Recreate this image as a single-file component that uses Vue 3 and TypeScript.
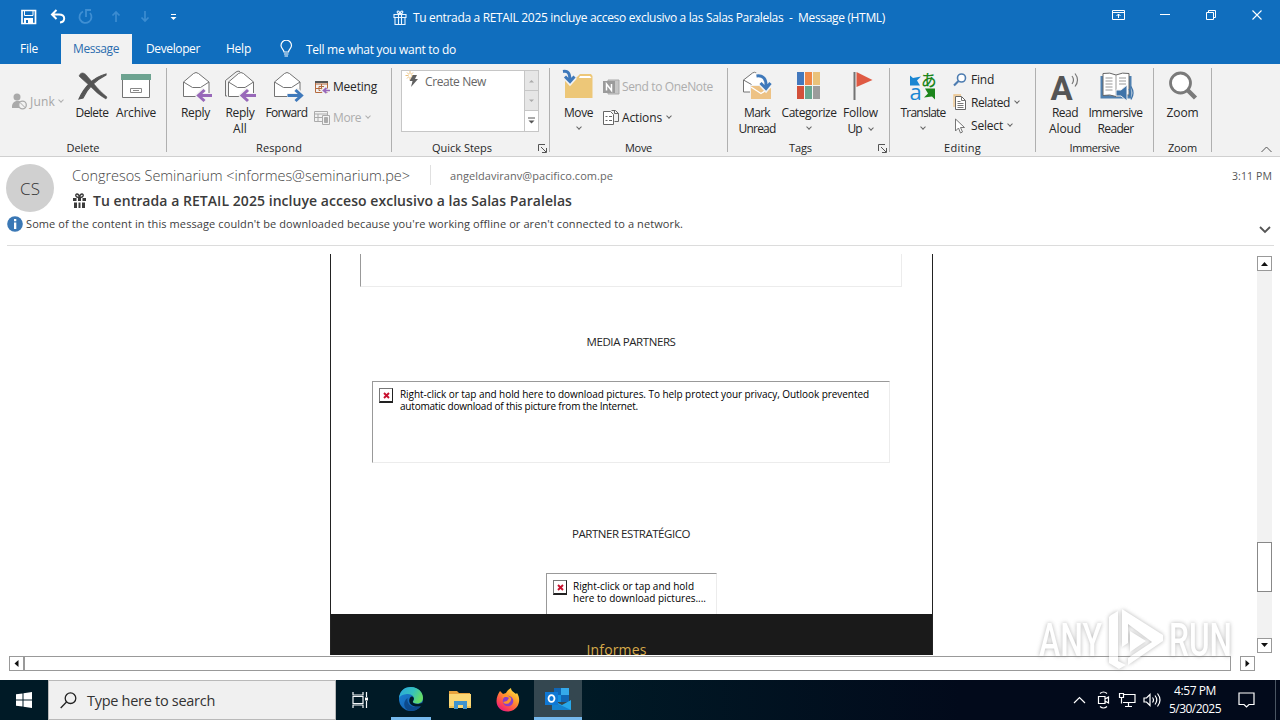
<script setup lang="ts">
import type { Directive } from 'vue'

// Tracks a line of text out (or in) so that it fills the given width.
const vFit: Directive<HTMLElement, number> = {
  mounted(el, binding) {
    const natural = el.getBoundingClientRect().width
    const count = (el.textContent ?? '').length
    if (count > 0) el.style.letterSpacing = `${(binding.value - natural) / count}px`
  },
}

const swatches: { x: number; y: number; color: string }[] = [
  { x: 6, y: 4, color: '#4278bd' },
  { x: 14, y: 4, color: '#ee8747' },
  { x: 22, y: 4, color: '#eac27a' },
  { x: 6, y: 18, color: '#d2503a' },
  { x: 14, y: 18, color: '#69a690' },
  { x: 22, y: 18, color: '#9c9c9c' },
]

const notice = [
  { text: 'Right-click or tap and hold here to download pictures. To help protect your privacy, Outlook prevented', width: 469 },
  { text: 'automatic download of this picture from the Internet.', width: 238 },
]
const shortNotice = [
  { text: 'Right-click or tap and hold', width: 121 },
  { text: 'here to download pictures....', width: 133 },
]
</script>

<template>
  <div class="screen">
    <header class="titlebar">
      <svg class="quick" width="190" height="32" viewBox="0 0 190 32" fill="none">
        <path d="M22 10.500h13.500v13H22z" stroke="#fff" stroke-width="1.700" />
        <path d="M24 18h9v6h-9z" fill="#fff" /><path d="M26 20h2v3h-2z" fill="#106ebe" />
        <path d="M24.500 11v4.500h8.500V11" stroke="#fff" />
        <path d="M56.500 10l-4.500 4.500 4.500 4.500M52.500 14.500h6.500c7 0 6.500 7.500 1 8" stroke="#fff" stroke-width="2" />
        <path d="M83 11.500a6 6 0 1 0 7 1.500M86 17v-7h5" stroke="#3f8fd3" stroke-width="1.800" />
        <path d="M116 22V12M112.500 15.500L116 12l3.500 3.500" stroke="#3b8cd1" stroke-width="1.700" />
        <path d="M145 11v10M141.500 17.500L145 21l3.500-3.500" stroke="#3b8cd1" stroke-width="1.700" />
        <path d="M171 14.500h5" stroke="#fff" /><path d="M170.500 17h6l-3 3z" fill="#fff" />
      </svg>
      <div class="caption">
        <svg width="14" height="16" viewBox="0 0 14 16" fill="none" stroke="#e9f5ff" stroke-width="1.100">
          <path d="M1 4.500h12v3H1zM2 7.500h10v7H2zM5.500 4.500v10M8.500 4.500v10M7 4C4 4 3.500 1 5 1s2 3 2 3 .5-3 2-3 1 3-2 3" />
        </svg>
        <span v-fit="472">Tu entrada a RETAIL 2025 incluye acceso exclusivo a las Salas Paralelas&nbsp; -&nbsp; Message (HTML)</span>
      </div>
      <svg class="controls" width="168" height="32" viewBox="0 0 168 32" fill="none" stroke="#fff">
        <path d="M0.500 10.500h12v9h-12zM0.500 12.500h12M6.500 18v-4M4.500 16l2-2 2 2" />
        <path d="M48 14.500h10M94.500 12.500h7v7h-7zM96.500 12v-1.500h7v7h-1.500" />
        <path d="M140.500 10.500l9 9M149.500 10.500l-9 9" stroke-width="1.100" />
      </svg>
    </header>

    <nav class="tabs">
      <div class="tab file"><span v-fit="18">File</span></div>
      <div class="tab active"><span v-fit="46">Message</span></div>
      <div class="tab dev"><span v-fit="54">Developer</span></div>
      <div class="tab help"><span v-fit="25">Help</span></div>
      <svg width="13" height="18" viewBox="0 0 13 18" fill="none" stroke="#fff" stroke-width="1.200">
        <path d="M4 12C4 9.500 1 8.500 1 5.500a5 5 0 0 1 10.500 0C11.500 8.500 8.500 9.500 8.500 12zM4 14h4.500M4.500 16h3.500" />
      </svg>
      <span class="tell" v-fit="150">Tell me what you want to do</span>
    </nav>

    <section class="ribbon">
      <div class="group g-delete">
        <div class="body">
          <div class="junk">
            <svg width="17" height="17" viewBox="0 0 17 17"><circle cx="6" cy="4" r="3.500" fill="#aaa" /><path d="M1 15c-1-9 10-9 10-4l-3 4z" fill="#aaa" /><circle cx="11.500" cy="12" r="3.800" fill="#f2f2f2" stroke="#aaa" stroke-width="1.300" /><path d="M9 9.500l5 5" stroke="#aaa" /></svg>
            <span v-fit="25">Junk</span><i class="chev pale" />
          </div>
          <div class="big w44">
            <svg width="36" height="37" viewBox="0 0 36 37"><path d="M5 8c2-5 6-3 8 0l7 8c4 5 8 9 13 13l-1 2c-7-4-11-8-16-13L7 10z" fill="#555" stroke="#555" stroke-width=".6" /><path d="M32 7C22 12 14 19 9 30l-4 1C10 19 20 9 32 6z" fill="#555" stroke="#555" stroke-width="1.200" /></svg>
            <span v-fit="33">Delete</span>
          </div>
          <div class="big w44">
            <svg width="36" height="37" viewBox="0 0 36 37"><path d="M4.500 11h27v18.500h-27z" fill="#fff" stroke="#737373" /><path d="M3 6h30v6H3z" fill="#6da390" /><path d="M12.500 20.500h11v4h-11zM15 22.500h6" fill="none" stroke="#888" /></svg>
            <span v-fit="40">Archive</span>
          </div>
        </div>
        <div class="label"><span v-fit="33">Delete</span></div>
      </div>

      <div class="group g-respond">
        <div class="body">
          <div class="big w41">
            <svg width="36" height="37" viewBox="0 0 36 37" fill="none"><path d="M5.500 14l10-8.500q2.500-2 5 0l10.500 8.500V28.500H5.500z" fill="#fff" stroke="#737373" /><path d="M5.500 14l9 5.500h8L31 14" stroke="#737373" /><path d="M35 27.500H20M26.500 21l-6.500 6.500 6.500 6" stroke="#f2f2f2" stroke-width="5" /><path d="M34 27.500H20M26.500 22l-6 5.500 6 5.500" stroke="#9868b9" stroke-width="3" /></svg>
            <span v-fit="29">Reply</span>
          </div>
          <div class="big w48">
            <svg width="36" height="37" viewBox="0 0 36 37" fill="none"><path d="M3.500 26V12.500L14 4q2-1.500 4-.5M5 28h-1.500V23" stroke="#737373" /><path d="M6.500 14l10-8.500q2.500-2 5 0L31.500 14V28.500H6.500z" fill="#fff" stroke="#737373" /><path d="M6.500 14l9 5.500h7.500L31.500 14" stroke="#737373" /><path d="M35 27.500H20M26 21l-6.500 6.500 6.500 6" stroke="#f2f2f2" stroke-width="5" /><path d="M34 27.500H19.500M26 22l-6 5.500 6 5.500" stroke="#9868b9" stroke-width="3" /></svg>
            <span v-fit="29">Reply</span><span v-fit="14">All</span>
          </div>
          <div class="big w45">
            <svg width="36" height="37" viewBox="0 0 36 37" fill="none"><path d="M5.500 14l10-8.500q2.500-2 5 0L31 14V28.500H5.500z" fill="#fff" stroke="#737373" /><path d="M5.500 14l9 5.500h8L31 14" stroke="#737373" /><path d="M18 27.500h15M26.500 21l6.500 6.500-6.500 6" stroke="#f2f2f2" stroke-width="5" /><path d="M18.500 27.500H32.500M26.500 22l6 5.500-6 5.500" stroke="#3f79bb" stroke-width="3" /></svg>
            <span v-fit="42">Forward</span>
          </div>
          <div class="stack two respond-stack">
            <div class="row"><svg width="17" height="16" viewBox="0 0 17 16" fill="none"><path d="M1.500 2.500h12v11h-12zM1.500 5h12M5 7.500h5v4H5zM7.500 5v8M1.500 9.500h12" stroke="#b56a3e" /><path d="M1 2h13v2H1z" fill="#555" /><path d="M16 11.500H9M12 8.500l-3 3 3 3" stroke="#f2f2f2" stroke-width="4" /><path d="M16 11.500H9.500M12.500 9l-3 2.500 3 2.500" stroke="#9868b9" stroke-width="1.700" /></svg><span v-fit="44">Meeting</span></div>
            <div class="row off"><svg width="17" height="16" viewBox="0 0 17 16" fill="none" stroke="#aaa"><path d="M.5 1.500h13v10H.5zM.5 4h13M4 4v7M.5 7.500h8" /><path d="M8.500 5.500h7v9h-7z" fill="#f2f2f2" /><path d="M10.500 7.500h3v5h-3z" fill="#aaa" /></svg><span v-fit="28">More</span><i class="chev pale" /></div>
          </div>
        </div>
        <div class="label"><span v-fit="46">Respond</span></div>
      </div>

      <div class="group g-steps">
        <div class="body">
          <div class="gallery">
            <div class="step">
              <svg width="18" height="19" viewBox="0 0 18 19" fill="none"><path d="M5 0v9M.5 4.500h9M2 1.500l6 6M8 1.500l-6 6" stroke="#eac07d" /><circle cx="5" cy="4.500" r="1.500" fill="#fff" /><path d="M8 4h4l-2 4h3l-7 8 1.500-6H4.500z" fill="#606060" /></svg>
              <span v-fit="61">Create New</span>
            </div>
            <div class="spin">
              <div><svg width="7" height="4"><path d="M1 3.500h5L3.500 1z" fill="#aaa" /></svg></div>
              <div><svg width="7" height="4"><path d="M1 .5h5L3.500 3z" fill="#aaa" /></svg></div>
              <div><svg width="9" height="8"><path d="M1 1h7" stroke="#555" /><path d="M1.500 3.500h6l-3 3z" fill="#555" /></svg></div>
            </div>
          </div>
        </div>
        <div class="label launch"><span v-fit="60">Quick Steps</span><svg width="9" height="9" viewBox="0 0 9 9" fill="none" stroke="#555"><path d="M.5 7V.500H7M3 3l5 5M8.500 4v4.500H4" /></svg></div>
      </div>

      <div class="group g-move">
        <div class="body">
          <div class="big w45">
            <svg width="36" height="37" viewBox="0 0 36 37" fill="none"><path d="M4 12l10-1 5-5h11l1.500 2v22H4z" fill="#edc778" /><path d="M19 8h10l1.500 2H18z" fill="#fff" /><path d="M2 3c6-1 7 4 7 10M4 9l5 5.500 5-5.500" stroke="#f2f2f2" stroke-width="5" /><path d="M2 3.500c6-1 7 3 7 10M4 8.500l5 5 4.500-5" stroke="#3f79bb" stroke-width="3" /></svg>
            <span v-fit="29">Move</span><i class="chev down" />
          </div>
          <div class="stack two move-stack">
            <div class="row off"><svg width="17" height="16" viewBox="0 0 17 16"><path d="M5 1h11v14H5z" fill="#c6c6c6" stroke="#aaa" /><path d="M0 2h12v12H0z" fill="#9b9b9b" /><path d="M3.500 11.500V5l5 6.500V5" fill="none" stroke="#fff" stroke-width="1.500" /></svg><span v-fit="91">Send to OneNote</span></div>
            <div class="row"><svg width="17" height="17" viewBox="0 0 17 17" fill="none" stroke="#666"><path d="M8.500 1.500h4l3 3v8h-4M11.500 1.500v3h4" /><path d="M.5 2.500h7l3 3v10H.5z" fill="#fff" /><path d="M2.500 7.500h2M6 7.500h3M2.500 11.500h2M6 11.500h3" /></svg><span v-fit="40">Actions</span><i class="chev" /></div>
          </div>
        </div>
        <div class="label"><span v-fit="27">Move</span></div>
      </div>

      <div class="group g-tags">
        <div class="body">
          <div class="big w44">
            <svg width="36" height="37" viewBox="0 0 36 37" fill="none"><path d="M4.500 12l9-7q2-1.500 4 0L27 12V24H4.500z" fill="#fff" stroke="#737373" /><path d="M4.500 12l8 4.500" stroke="#737373" /><path d="M11 17h22v15H11z" fill="#f2f2f2" /><path d="M12 18h20v13H12z" fill="#edc285" /><path d="M12 19l10 6.500L32 19" stroke="#fff" stroke-width="1.300" /><path d="M17 7c8-1 11 4 10 12M22 16l5 5.500 5-6" stroke="#f2f2f2" stroke-width="5" /><path d="M17.500 8c7-1 10 3 9.500 11M21.500 15l5.500 5.500 4.500-5.500" stroke="#3f79bb" stroke-width="3" /></svg>
            <span v-fit="26">Mark</span><span v-fit="37">Unread</span>
          </div>
          <div class="big w60">
            <svg width="36" height="37" viewBox="0 0 36 37"><rect v-for="s in swatches" :key="s.x + '-' + s.y" :x="s.x" :y="s.y" width="7" height="13" :fill="s.color" /></svg>
            <span v-fit="55">Categorize</span><i class="chev down" />
          </div>
          <div class="big w43">
            <svg width="36" height="37" viewBox="0 0 36 37"><path d="M10.500 4h2v28h-2z" fill="#737373" /><path d="M13.500 4l16 8-16 7z" fill="#df5a43" /></svg>
            <span v-fit="35">Follow</span><div class="with-chev"><span v-fit="14">Up</span><i class="chev" /></div>
          </div>
        </div>
        <div class="label launch"><span v-fit="23">Tags</span><svg width="9" height="9" viewBox="0 0 9 9" fill="none" stroke="#555"><path d="M.5 7V.500H7M3 3l5 5M8.500 4v4.500H4" /></svg></div>
      </div>

      <div class="group g-edit">
        <div class="body">
          <div class="big w50">
            <svg width="36" height="37" viewBox="0 0 36 37"><path d="M5 7.500l3 2.500 8-1.500-4 4 3 5H5z" fill="#1a86d2" /><path d="M30 31.500l-3-3-8 1 4-4-3-5h10z" fill="#1c861c" /><text x="16" y="17.500" class="kana">あ</text><text x="4.500" y="32" class="latin">a</text></svg>
            <span v-fit="45">Translate</span><i class="chev down" />
          </div>
          <div class="stack three">
            <div class="row"><svg width="14" height="14" viewBox="0 0 14 14" fill="none"><circle cx="8.500" cy="5" r="4" stroke="#4d7cb0" stroke-width="1.600" fill="#fff" /><path d="M5.500 8L1 12.500" stroke="#4d7cb0" stroke-width="2.200" /></svg><span v-fit="23">Find</span></div>
            <div class="row"><svg width="14" height="17" viewBox="0 0 14 17" fill="none"><path d="M1 13V1h7" stroke="#edc285" stroke-width="1.300" /><path d="M2.500 2.500h6l4 4v9h-10z" fill="#fff" stroke="#666" /><path d="M8.500 3v3.500h4M4.500 7.500h3M4.500 9.500h6M4.500 11.500h6M4.500 13.500h6" stroke="#777" /></svg><span v-fit="39">Related</span><i class="chev" /></div>
            <div class="row"><svg width="14" height="16" viewBox="0 0 14 16"><path d="M2.500 1v12l3-3 2 5 2-1-2-4.500h4z" fill="#fff" stroke="#777" /></svg><span v-fit="32">Select</span><i class="chev" /></div>
          </div>
        </div>
        <div class="label"><span v-fit="37">Editing</span></div>
      </div>

      <div class="group g-immersive">
        <div class="body">
          <div class="big w40">
            <svg width="36" height="37" viewBox="0 0 36 37"><text x="3.500" y="31.500" class="aloud">A</text><path d="M25 8q3 4 0 8M28 5.500q5 6.500 0 13" fill="none" stroke="#777" stroke-width="1.200" /></svg>
            <span v-fit="26">Read</span><span v-fit="32">Aloud</span>
          </div>
          <div class="big w61">
            <svg width="36" height="37" viewBox="0 0 36 37" fill="none"><path d="M2.500 8h31v22.500h-31z" fill="#4f80b0" /><path d="M5 5.500q7-1.500 13 1.500 6.500-3 13-1.500V27q-7-1-13 1.500Q12 26 5 27.500z" fill="#fff" stroke="#666" /><path d="M18 7v21M7.500 10h7M7.500 13h7M7.500 16h7M7.500 19h7M7.500 22h7M21 10h7M21 13h7M21 16h7" stroke="#999" /><path d="M18 22h5l6-5v16l-6-5h-5z" fill="#3f73a8" stroke="#f2f2f2" /><path d="M31 21q2.500 4 0 8M33 18.500q4 6.500 0 13" stroke="#3f73a8" stroke-width="1.300" /></svg>
            <span v-fit="54">Immersive</span><span v-fit="36">Reader</span>
          </div>
        </div>
        <div class="label"><span v-fit="50">Immersive</span></div>
      </div>

      <div class="group g-zoom">
        <div class="body">
          <div class="big w58">
            <svg width="36" height="37" viewBox="0 0 36 37" fill="none"><circle cx="15.500" cy="15" r="10" fill="#fff" stroke="#7a7a7a" stroke-width="2.800" /><path d="M22.500 22l8 8" stroke="#7a7a7a" stroke-width="4.500" /></svg>
            <span v-fit="32">Zoom</span>
          </div>
        </div>
        <div class="label"><span v-fit="29">Zoom</span></div>
      </div>
      <svg class="collapse" width="11" height="7" viewBox="0 0 11 7" fill="none" stroke="#555"><path d="M.5 6l5-5 5 5" /></svg>
    </section>

    <section class="message-head">
      <div class="avatar"><span v-fit="20">CS</span></div>
      <div class="lines">
        <div class="from">
          <span class="sender" v-fit="338">Congresos Seminarium &lt;informes@seminarium.pe&gt;</span>
          <i class="rule" />
          <span class="to" v-fit="163">angeldaviranv@pacifico.com.pe</span>
          <span class="time" v-fit="40">3:11 PM</span>
        </div>
        <div class="subject">
          <svg width="13" height="15" viewBox="0 0 13 15" fill="none"><path d="M6.500 4.500C2 4.500 2 1 4 1s2.500 3.500 2.500 3.500S7 1 9 1s2 3.500-2.500 3.500" stroke="#3b3b3b" stroke-width="1.300" /><path d="M0 5h3.500v3H0zM5 5h3v3H5zM9.500 5H13v3H9.500zM1 9.500h3V15H1zM5.500 9.500h2V15h-2zM9 9.500h3V15H9z" fill="#3b3b3b" /></svg>
          <span v-fit="479">Tu entrada a RETAIL 2025 incluye acceso exclusivo a las Salas Paralelas</span>
        </div>
      </div>
      <div class="info">
        <svg width="16" height="16" viewBox="0 0 16 16"><circle cx="8" cy="8" r="7.800" fill="#3b78b5" /><path d="M7 6.500h2.300V13H7zM7 3h2.300v2.200H7z" fill="#fff" /></svg>
        <span v-fit="657">Some of the content in this message couldn't be downloaded because you're working offline or aren't connected to a network.</span>
        <svg class="more" width="12" height="8" viewBox="0 0 12 8" fill="none"><path d="M1 1l5 5 5-5" stroke="#555" stroke-width="1.800" /></svg>
      </div>
    </section>

    <main class="reading">
      <article class="mail">
        <div class="frame top-frame" />
        <h3><span v-fit="89">MEDIA PARTNERS</span></h3>
        <div class="frame media">
          <i class="broken"><svg width="7" height="7"><path d="M1 1l5 5M6 1L1 6" stroke="#c8102e" stroke-width="1.900" /></svg></i>
          <div class="notice"><p v-for="l in notice" :key="l.text"><span v-fit="l.width">{{ l.text }}</span></p></div>
        </div>
        <h3 class="second"><span v-fit="118">PARTNER ESTRATÉGICO</span></h3>
        <div class="frame partner">
          <i class="broken"><svg width="7" height="7"><path d="M1 1l5 5M6 1L1 6" stroke="#c8102e" stroke-width="1.900" /></svg></i>
          <div class="notice"><p v-for="l in shortNotice" :key="l.text"><span v-fit="l.width">{{ l.text }}</span></p></div>
        </div>
        <footer><span v-fit="60">Informes</span></footer>
      </article>
      <div class="vbar">
        <div class="key"><svg width="9" height="5"><path d="M1 5h7L4.500 1z" fill="#111" /></svg></div>
        <div class="vthumb" />
        <div class="key"><svg width="9" height="5"><path d="M1 0h7L4.500 4z" fill="#111" /></svg></div>
      </div>
    </main>
    <div class="hbar">
      <div class="key"><svg width="5" height="9"><path d="M4.500 1v7L.5 4.500z" fill="#111" /></svg></div>
      <div class="hthumb" />
      <div class="key end"><svg width="5" height="9"><path d="M.5 1v7l4-3.500z" fill="#111" /></svg></div>
    </div>

    <svg class="watermark" width="210" height="76" viewBox="0 0 210 76">
      <g class="mark">
        <text x="8" y="53" textLength="63" lengthAdjust="spacingAndGlyphs">ANY</text>
        <path d="M80 12l7-4v50l8 4-7 4-10-6V14zM91 6l41 26v6L97 62v-7l24-16-24-18v19l-6 4z" fill="#fff" />
        <path d="M99 28l16 10-16 11z" fill="#fff" />
        <text x="138" y="53" textLength="63" lengthAdjust="spacingAndGlyphs">RUN</text>
      </g>
    </svg>

    <footer class="taskbar">
      <div class="start"><svg width="16" height="16" viewBox="0 0 16 16"><path d="M0 2.300l6.500-.9v6.100H0zM7.500 1.200L16 0v7.500H7.500zM0 8.500h6.500v6.100L0 13.700zM7.500 8.500H16V16l-8.500-1.200z" fill="#fff" /></svg></div>
      <div class="search">
        <svg width="17" height="17" viewBox="0 0 17 17" fill="none" stroke="#222" stroke-width="1.300"><circle cx="10.500" cy="6.200" r="5.300" /><path d="M6.500 10L.7 16" /></svg>
        <span v-fit="128">Type here to search</span>
      </div>
      <div class="app views"><svg width="17" height="16" viewBox="0 0 17 16" fill="none" stroke="#f4f8fa" stroke-width="1.200"><path d="M1 0v3h10V0M1 4.500h10v7H1zM1 16v-3h10v3M14.500 0v5M14.500 9v7" /><path d="M13 5.500h3v3h-3z" fill="#fff" stroke="none" /></svg></div>
      <div class="app browser run">
        <svg width="26" height="26" viewBox="0 0 26 26">
          <defs>
            <linearGradient id="edge-top" x1="0" y1="0" x2="1" y2=".4"><stop offset="0" stop-color="#2aa5e0" /><stop offset=".6" stop-color="#35c1bd" /><stop offset="1" stop-color="#64dc67" /></linearGradient>
            <linearGradient id="edge-low" x1="0" y1="0" x2="1" y2="1"><stop offset="0" stop-color="#1b84d8" /><stop offset="1" stop-color="#1256a4" /></linearGradient>
          </defs>
          <circle cx="13" cy="13" r="12" fill="url(#edge-low)" />
          <path d="M1 12C2 4 7 1 13 1c7 0 12 5 12 11 0 5-5 6.500-9 5-1.500-.6-1.500-1.500-.6-2.500C17.500 11 13.500 7.500 9 8 5 8.300 2 10 1 12z" fill="url(#edge-top)" />
          <path d="M9.500 12c-1 7 5 10.500 13 8.500-3 4-8 5-12 4-5-2-6-9-1-12.500z" fill="#0d4a8c" />
          <path d="M13.500 10.500c2.500 0 3 2.500 1.700 4.200-.8 1-.3 2 .8 2.500 2.500 1.200 6 .8 8.500-.8v2.800c-3 2-9 2-12-1.200-2-2.400-1.500-6.500 1-7.500z" fill="#001a26" />
        </svg>
      </div>
      <div class="app files"><svg width="24" height="22" viewBox="0 0 24 22"><path d="M1 2h8l2 2h11v15H1z" fill="#e8a33d" /><path d="M1 5h22v14H1z" fill="#fbd775" /><path d="M6 12h13v8h-4v-4h-5v4H6z" fill="#3f93cf" /><path d="M1 17h5v2H1zM19 17h4v2h-4z" fill="#f0c256" /></svg></div>
      <div class="app fox"><svg width="24" height="24" viewBox="0 0 24 24">
        <defs><linearGradient id="fox" x1=".9" y1="0" x2=".2" y2="1"><stop offset="0" stop-color="#fff04a" /><stop offset=".4" stop-color="#ff9a2c" /><stop offset=".75" stop-color="#ff4650" /><stop offset="1" stop-color="#e31587" /></linearGradient></defs>
        <path d="M4 3l3 3 3-1c1-2 3-4 5-5 0 3 3 4 5 6l1-1c2 3 2.500 6 2 9-1 6-6 9.500-11.500 9.500C5 23.500.5 19 .5 13 .5 9 2 6 4 3z" fill="url(#fox)" /><circle cx="12" cy="13" r="5.300" fill="#8b3fc8" /><path d="M6 9c3 1 4-1 7 1l-2 3-4 1c3 4 9 1 8-4-3-4-8-3-9-1z" fill="#ff9626" />
      </svg></div>
      <div class="app current run"><svg width="26" height="24" viewBox="0 0 26 24"><path d="M9 1h15v14H9z" fill="#1490df" /><path d="M16 1h8v7h-8z" fill="#35a9ea" /><path d="M9 1h7v7H9zM16 8h8v7h-8z" fill="#1066b5" /><path d="M7 13l10 5 9-5v10H7z" fill="#28a8ea" /><path d="M7 14l19 9H7z" fill="#1583cf" /><path d="M0 5h13v13H0z" fill="#0f78d4" /><ellipse cx="6.500" cy="11.500" rx="3" ry="3.400" fill="none" stroke="#fff" stroke-width="1.800" /></svg></div>
      <div class="tray">
        <svg width="90" height="20" viewBox="0 0 90 20" fill="none" stroke="#fff" stroke-width="1.200">
          <path d="M1 13l5.500-5.500L12 13" />
          <path d="M25.500 6.500h6.500v7h-6.500zM32 9l3.500-2v6L32 11M27 3.500q3.500-3 7 0M27 16.500q3.500 3 7 0" />
          <path d="M51 4.500h11v8H50M46.500 3.500h4v4h-4zM48.500 7.500v6M55.500 12.500v4M52 16.500h7" />
          <path d="M71 8h2.500L77 4.500v11L73.500 12H71zM79.500 7.500q2 2.500 0 5M82 5.500q3.500 4.500 0 9M84.500 3.500q5 6.500 0 13" />
        </svg>
      </div>
      <div class="clock"><span v-fit="42">4:57 PM</span><span v-fit="52">5/30/2025</span></div>
      <svg class="notes" width="17" height="18" viewBox="0 0 17 18" fill="none" stroke="#fff" stroke-width="1.200"><path d="M1 2h15v11.500h-5l-2.500 2.500L6 13.500H1z" /></svg>
      <i class="peek" />
    </footer>
  </div>
</template>

<style>
html,
body {
  margin: 0;
  background: #fff;
  overflow: hidden;
}
</style>

<style scoped>
.screen {
  position: relative;
  display: flex;
  flex-direction: column;
  width: 1280px;
  height: 720px;
  overflow: hidden;
  background: #fff;
  font-family: "Open Sans", "Noto Sans", sans-serif;
  font-size: 12px;
  color: #262626;
}
.screen * { box-sizing: border-box; }
.screen span { display: inline-block; white-space: nowrap; flex: none; }
svg { display: block; flex: none; }
p, h3 { margin: 0; font-weight: 400; }

.titlebar {
  display: flex;
  height: 34px;
  background: #106ebe;
  color: #fff;
}
.caption {
  display: flex;
  align-items: center;
  gap: 6px;
  width: 922px;
  padding-left: 203px;
  height: 35px;
}

.tabs {
  display: flex;
  align-items: center;
  height: 30px;
  background: #106ebe;
  color: #fff;
}
.tab { line-height: 30px; height: 30px; }
.file { width: 61px; padding-left: 20px; }
.active { width: 71px; padding-left: 12px; background: #f2f2f2; color: #2b6cae; }
.dev { padding-left: 14px; width: 94px; }
.help { width: 54px; }
.tell { margin-left: 13px; }

.ribbon {
  display: flex;
  height: 93px;
  padding-top: 4px;
  background: #f2f2f2;
  border-bottom: 1px solid #d0d0d0;
}
.group {
  height: 84px;
  border-right: 1px solid #b0b0b0;
}
.body { display: flex; height: 72px; }
.g-delete { width: 167px; }
.g-respond { width: 225px; }
.g-respond .body { padding-left: 8px; }
.g-steps { width: 158px; }
.g-move { width: 178px; }
.g-move .body { padding-left: 6px; }
.g-tags { width: 162px; }
.g-tags .body { padding-left: 7px; }
.g-edit { width: 146px; }
.g-edit .body { padding-left: 8px; }
.g-immersive { width: 118px; }
.g-immersive .body { padding-left: 9px; }
.g-zoom { width: 58px; }
.label {
  display: flex;
  justify-content: center;
  height: 16px;
  line-height: 16px;
  font-size: 11px;
}
.launch { justify-content: flex-end; align-items: center; padding-right: 2px; }
.g-steps .launch { gap: 46px; }
.g-tags .launch { gap: 66px; }
.big {
  display: flex;
  flex-direction: column;
  align-items: center;
  line-height: 16px;
}
.w40 { width: 40px; }
.w41 { width: 41px; }
.w43 { width: 43px; }
.w44 { width: 44px; }
.w45 { width: 45px; }
.w48 { width: 48px; }
.w50 { width: 50px; }
.w58 { width: 57px; }
.w60 { width: 60px; }
.w61 { width: 61px; }
.with-chev { display: flex; align-items: center; gap: 6px; }
.chev {
  flex: none;
  width: 4px;
  height: 4px;
  margin: -3px 1px 0;
  border: solid #666;
  border-width: 0 1px 1px 0;
  transform: rotate(45deg);
}
.chev.pale { border-color: #b0b0b0; }
.chev.down { margin-top: 4px; }
.junk {
  display: flex;
  align-items: center;
  width: 70px;
  height: 67px;
  padding-left: 11px;
  gap: 2px;
  color: #a6a6a6;
}
.junk .chev { margin-left: 2px; }
.stack { display: flex; flex-direction: column; }
.row { display: flex; align-items: center; gap: 2px; }
.row .chev { margin-left: 3px; }
.off { color: #adadad; }
.two { padding-top: 3px; }
.two .row { height: 31px; }
.respond-stack { padding-left: 5px; }
.move-stack { padding-left: 2px; }
.three { padding-left: 5px; }
.three .row { height: 23px; gap: 4px; }
.three .chev { margin-left: 1px; }
.kana { font: 500 15.500px "Noto Sans CJK JP", sans-serif; fill: #1c861c; }
.latin { font: 500 22px "Open Sans", sans-serif; fill: #1a86d2; }
.aloud { font: bold 33px Roboto, sans-serif; fill: #555; }

.gallery {
  display: flex;
  width: 138px;
  height: 62px;
  margin: 2px 0 0 9px;
  border: 1px solid #c6c6c6;
  background: #fff;
}
.step {
  display: flex;
  gap: 2px;
  width: 122px;
  height: 22px;
  padding-left: 3px;
  line-height: 21px;
  color: #666;
}
.spin { width: 14px; border-left: 1px solid #c6c6c6; }
.spin div {
  display: flex;
  align-items: center;
  justify-content: center;
  height: 20px;
  background: #e6e6e6;
  border-bottom: 1px solid #c6c6c6;
}
.spin div:last-child { background: #fff; border: 0; }
.collapse { margin: 78px 0 0 49px; }

.message-head {
  display: grid;
  grid-template-columns: 72px 1fr;
  grid-template-rows: 57px 32px;
  height: 89px;
  margin-right: 6px;
}
.avatar {
  display: grid;
  place-items: center;
  width: 48px;
  height: 48px;
  margin: 7px 0 0 6px;
  border-radius: 50%;
  background: #d0d0d0;
  color: #333;
  font-size: 17px;
  font-weight: 300;
}
.lines { padding-top: 6px; }
.from { display: flex; align-items: center; height: 24px; color: #606060; }
.sender { font-size: 14.500px; font-weight: 300; color: #444; }
.rule { width: 1px; height: 20px; margin: 0 19px 0 20px; background: #e0e0e0; }
.to { font-size: 11px; color: #666; }
.time { font-size: 10.500px; margin: 1px 2px 0 auto; color: #555; }
.subject {
  display: flex;
  align-items: center;
  gap: 7px;
  height: 27px;
  padding-left: 1px;
  font-size: 14px;
  font-weight: 600;
  color: #3b3b3b;
}
.info {
  grid-column: 1 / 3;
  display: flex;
  align-items: center;
  gap: 3px;
  height: 32px;
  margin-left: 7px;
  padding-bottom: 12px;
  border-bottom: 1px solid #dcdcdc;
  font-size: 11px;
  color: #404040;
}
.more { margin: 12px 3px 0 auto; }

.reading {
  display: flex;
  height: 401px;
  padding-left: 330px;
  margin-top: 8px;
}
.mail {
  display: flex;
  flex-direction: column;
  align-items: center;
  width: 603px;
  height: 401px;
  border: solid #222;
  border-width: 0 1px;
  overflow: hidden;
}
.frame {
  flex: none;
  display: flex;
  border: 1px solid #ececec;
  border-top-color: #999;
  border-left-color: #999;
}
.top-frame { width: 542px; height: 33px; border-top: 0; align-self: flex-start; margin-left: 29px; }
h3 { height: 20px; margin-top: 45px; margin-right: 1px; line-height: 20px; font-size: 11.500px; }
.media { width: 518px; height: 82px; margin-top: 29px; margin-right: 1px; padding: 6px 0 0 6px; }
.second { margin-top: 61px; }
.partner { width: 171px; height: 50px; margin-top: 29px; margin-bottom: -9px; padding: 6px 0 0 6px; }
.broken {
  display: grid;
  place-items: center;
  width: 14px;
  height: 15px;
  border: 1px solid #777;
  border-right: 1px solid #222;
  border-bottom: 2px solid #222;
}
.notice { margin: 0 0 0 6px; font-size: 10px; color: #000; line-height: 12px; }
.media .notice { margin-left: 7px; }
.notice p { height: 12px; }
.mail footer {
  position: relative;
  flex: none;
  align-self: stretch;
  height: 60px;
  padding-top: 25px;
  background: #1a1a1a;
  color: #d5a94a;
  font-size: 14px;
  line-height: 22px;
  text-align: center;
}
.mail footer span { margin-left: -30px; }
.key {
  display: grid;
  place-items: center;
  width: 15px;
  height: 15px;
  border: 1px solid #999;
  background: #fff;
}
.vbar {
  display: flex;
  flex-direction: column;
  width: 15px;
  height: 397px;
  margin: 2px 0 0 324px;
  background: #f2f2f2;
}
.vbar .key:last-child { margin-top: auto; }
.vthumb { height: 50px; margin-top: 271px; border: 1px solid #888; background: #fff; }
.hbar {
  display: flex;
  width: 1246px;
  height: 15px;
  margin: 1px 0 0 9px;
}
.hthumb { width: 1207px; border: 1px solid #999; background: #fff; }
.end { margin-left: 9px; }

.watermark { position: absolute; left: 1031px; top: 603px; }
.mark { opacity: .62; filter: drop-shadow(0 0 2px #888); }
.mark text { font: 500 46px Roboto, sans-serif; fill: #fff; }

.taskbar {
  display: flex;
  align-items: center;
  height: 40px;
  margin-top: 9px;
  background: linear-gradient(90deg, #001a26 0%, #001a26 45%, #020a1b 75%, #020a1b 100%);
  color: #fff;
}
.start { display: grid; place-items: center; width: 48px; height: 40px; }
.search {
  display: flex;
  align-items: center;
  gap: 10px;
  width: 288px;
  height: 40px;
  padding-left: 11px;
  border: 1px solid #b9b9b9;
  background: #f0f0f0;
  color: #333;
  font-size: 14.500px;
}
.app { display: grid; place-items: center; height: 40px; }
.views { width: 48px; }
.browser { width: 40px; margin: 0 7px; }
.files { width: 44px; }
.fox { width: 52px; }
.current { width: 48px; background: #344750; }
.run { border-bottom: 3px solid #76b9ed; }
.tray { margin-left: 491px; }
.clock {
  display: flex;
  flex-direction: column;
  align-items: center;
  width: 64px;
  line-height: 18px;
  font-size: 12px;
}
.notes { margin-left: 11px; }
.peek { width: 1px; height: 40px; margin-left: 20px; background: #4a5562; }
</style>
